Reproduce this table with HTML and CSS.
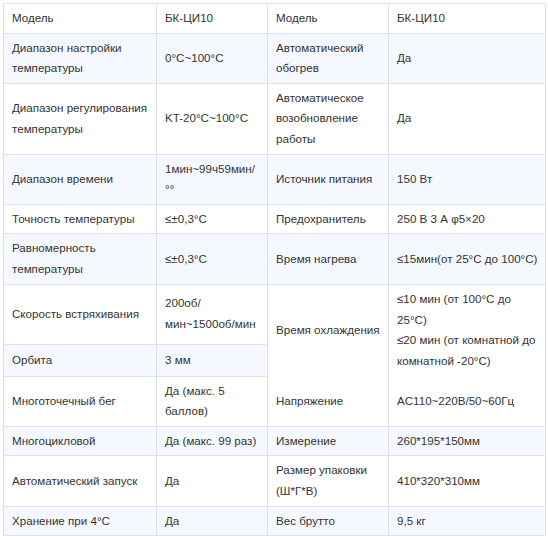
FILE: index.html
```html
<!DOCTYPE html>
<html lang="ru">
<head>
<meta charset="utf-8">
<title>Характеристики</title>
<link rel="stylesheet" href="styles.css">
</head>
<body>
<div class="page">
<table class="spec">
  <colgroup>
    <col class="c1"><col class="c2"><col class="c3"><col class="c4">
  </colgroup>
  <tbody>
    <tr class="w"><td>Модель</td><td>БК-ЦИ10</td><td>Модель</td><td>БК-ЦИ10</td></tr>
    <tr class="b"><td>Диапазон настройки температуры</td><td>0°C~100°C</td><td>Автоматический обогрев</td><td>Да</td></tr>
    <tr class="w"><td>Диапазон регулирования температуры</td><td>KT-20°C~100°C</td><td>Автоматическое возобновление работы</td><td>Да</td></tr>
    <tr class="b"><td>Диапазон времени</td><td>1мин~99ч59мин/<span class="nw">°°</span></td><td>Источник питания</td><td>150 Вт</td></tr>
    <tr class="w"><td>Точность температуры</td><td>≤±0,3°C</td><td>Предохранитель</td><td>250 В 3 А φ5×20</td></tr>
    <tr class="b"><td>Равномерность температуры</td><td>≤±0,3°C</td><td>Время нагрева</td><td>≤15мин(от 25°C до 100°C)</td></tr>
    <tr class="w r7"><td>Скорость встряхивания</td><td>200об/мин~1500об/мин</td><td rowspan="2" class="nob">Время охлаждения</td><td rowspan="2" class="nob">≤10 мин (от 100°C до 25°C)<br>≤20 мин (от комнатной до комнатной -20°C)</td></tr>
    <tr class="b r8"><td>Орбита</td><td>3 мм</td></tr>
    <tr class="w"><td>Многоточечный бег</td><td>Да (макс. 5 баллов)</td><td class="not">Напряжение</td><td class="not">AC110~220В/50~60Гц</td></tr>
    <tr class="b"><td>Многоцикловой</td><td>Да (макс. 99 раз)</td><td>Измерение</td><td>260*195*150мм</td></tr>
    <tr class="w"><td>Автоматический запуск</td><td>Да</td><td>Размер упаковки (Ш*Г*В)</td><td>410*320*310мм</td></tr>
    <tr class="b"><td>Хранение при 4°C</td><td>Да</td><td>Вес брутто</td><td>9,5 кг</td></tr>
  </tbody>
</table>
</div>
</body>
</html>
```

FILE: styles.css
```css
html, body {
  margin: 0;
  padding: 0;
  background: #ffffff;
}
.page {
  padding: 3px 0 0 3px;
}
.spec {
  border-collapse: collapse;
  table-layout: fixed;
  width: 542px;
  font-family: "Liberation Sans", Arial, sans-serif;
  font-size: 11.6px;
  line-height: 20.6px;
  color: #333333;
}
.c1 { width: 153px; }
.c2 { width: 111px; }
.c3 { width: 121px; }
.c4 { width: 157px; }
.spec td {
  border: 1px solid #dfe2e6;
  padding: 4px 6px 4px 8px;
  vertical-align: middle;
  text-align: left;
  word-wrap: break-word;
}
.nw { white-space: nowrap; }
.spec tr.w { background: #ffffff; }
.spec tr.b { background: #f5f9ff; }
.spec tr.r7 { height: 60px; }
.spec tr.r8 { height: 32px; }
.spec td.nob { border-bottom: hidden; }
.spec td.not { border-top: hidden; }
```
